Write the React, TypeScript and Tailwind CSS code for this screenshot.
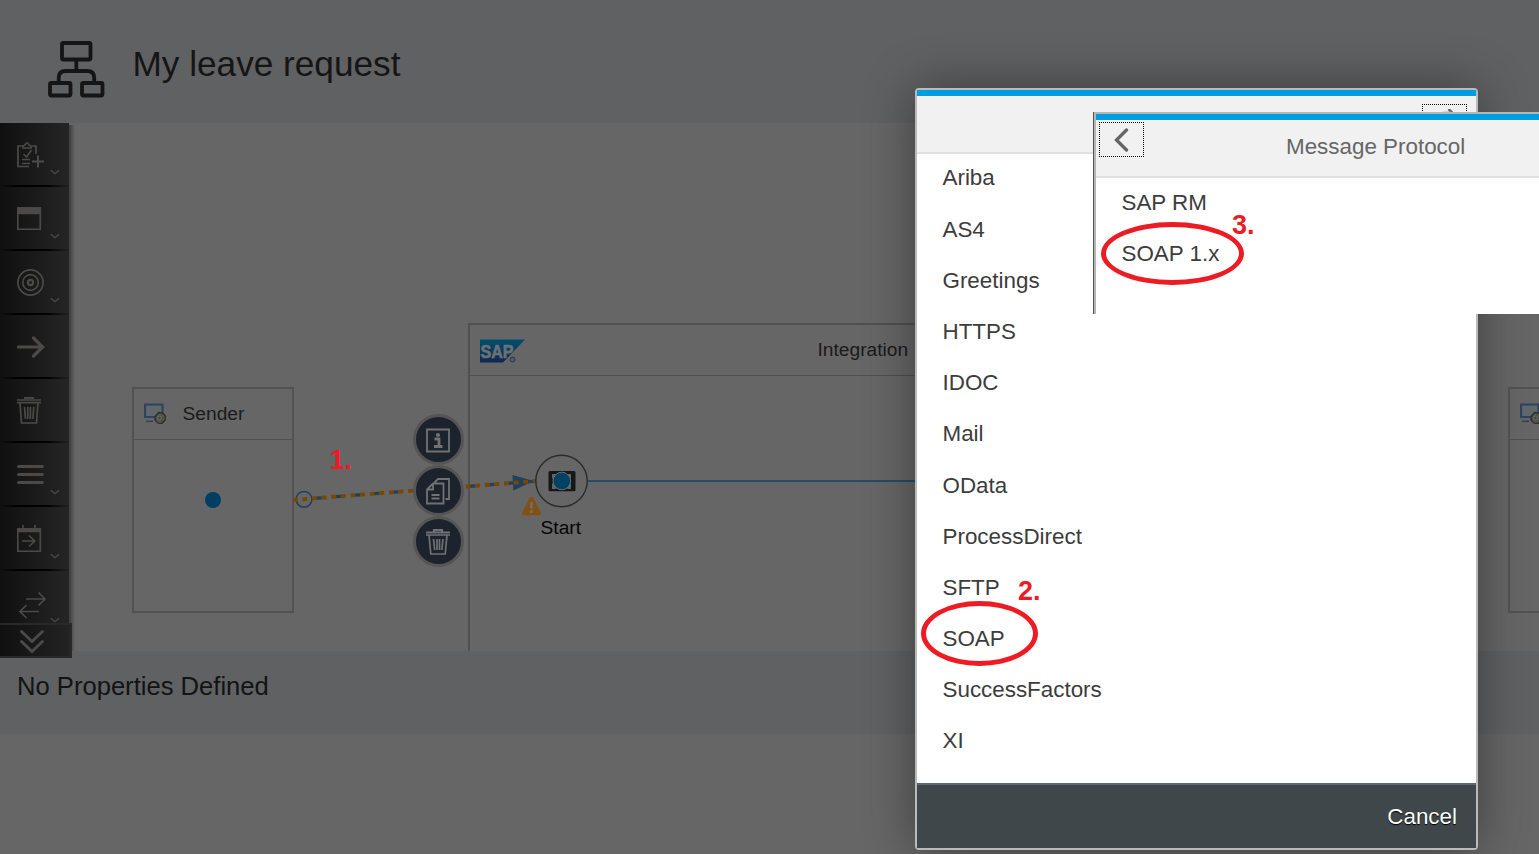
import React from "react";

const protocols = [
  "Ariba",
  "AS4",
  "Greetings",
  "HTTPS",
  "IDOC",
  "Mail",
  "OData",
  "ProcessDirect",
  "SFTP",
  "SOAP",
  "SuccessFactors",
  "XI",
];

const toolIcons: { name: string; menu: boolean; art: React.ReactNode }[] = [
  {
    name: "task",
    menu: true,
    art: (
      <g strokeWidth="1.7">
        <path d="M12 25.500H1V5h4.500M15 5h4v8" />
        <path d="M6 7V5l2-1q2-4.500 4 0l2 1v2z" />
        <path d="M6.500 13l3 3 5-7M5 18.500h8M5 22.500h8" />
        <path d="M15 20.500h12M21 14.500v12" strokeWidth="2" />
      </g>
    ),
  },
  {
    name: "window",
    menu: true,
    art: (
      <g strokeWidth="1.600">
        <path d="M.8 3h22.500v21.200H.8z" />
        <path d="M.8 3h22.500v5.500H.8z" fill="#4b4a48" />
      </g>
    ),
  },
  {
    name: "target",
    menu: true,
    art: (
      <g strokeWidth="1.700">
        <circle cx="13.500" cy="13.500" r="12.600" />
        <circle cx="13.500" cy="13.500" r="7.800" />
        <circle cx="13.500" cy="13.500" r="2.600" strokeWidth="2.200" />
      </g>
    ),
  },
  {
    name: "connector",
    menu: false,
    art: <path d="M1.500 14H26M16.500 5l9 9-9 9" strokeWidth="3.2" strokeLinecap="round" strokeLinejoin="round" />,
  },
  {
    name: "delete",
    menu: false,
    art: (
      <g strokeWidth="1.700">
        <path d="M0 3h24M0 5.600h24M8 2V.8h8V2" />
        <path d="M3 6l1.500 20h15L21 6M7.500 10l1 12M10.800 10v12M13.400 10v12M16.800 10l-1 12" />
      </g>
    ),
  },
  {
    name: "list",
    menu: true,
    art: <path d="M1.500 5.500h24M1.500 13.500h24M1.500 21.500h24" strokeWidth="3" strokeLinecap="round" />,
  },
  {
    name: "event",
    menu: true,
    art: (
      <g strokeWidth="1.600">
        <path d="M.8 4h22.500v22.200H.8z" />
        <path d="M.8 4h22.500v2.500H.8z" fill="#4b4a48" />
        <path d="M6 0v4M18 0v4M5 16h12.500M12 10.500l5.800 5.500-5.800 5.500" />
      </g>
    ),
  },
  {
    name: "exchange",
    menu: true,
    art: (
      <path
        d="M9 10h19M21.500 3.500L28 10l-6.500 6.500M22 22.500H3M9.500 16L3 22.500 9.500 29"
        strokeWidth="1.700"
      />
    ),
  },
];

function Tool({ name, menu, art }: { name: string; menu: boolean; art: React.ReactNode }) {
  return (
    <div className="flex h-16 shrink-0 flex-col" aria-label={name}>
      <div className="flex h-[62px] justify-between pl-[17px] pr-[9px] pt-[18px]">
        <svg width="30" height="30" viewBox="0 0 30 30" fill="none" stroke="#4b4a48">
          {art}
        </svg>
        {menu && (
          <svg className="mt-[28px]" width="10" height="7" viewBox="0 0 10 7" fill="none" stroke="#4b4a48" strokeWidth="1.3">
            <path d="M.8 1.300L5 4.700l4.200-3.400" />
          </svg>
        )}
      </div>
      <div className="h-0.5 bg-linear-to-r from-[#101010] via-black to-[#222222]" />
    </div>
  );
}

function SystemIcon() {
  return (
    <svg className="shrink-0" width="23" height="22" viewBox="0 0 23 22" fill="none">
      <path d="M1 1.500h17.500V14H1z" fill="#61676b" stroke="#2f435f" strokeWidth="2.200" />
      <path d="M2 18.300h7" stroke="#2f435f" strokeWidth="1.600" />
      <path d="M15 9.300l4 1 2.500 3-.5 4-3 3-4-.2-3-3 .3-4z" fill="#5b5b38" stroke="#282c34" strokeWidth="1.300" />
      <circle cx="15.500" cy="15" r="3.400" fill="#62655f" stroke="#44484a" />
      <circle cx="15.500" cy="15" r="1.200" fill="#3a4047" />
    </svg>
  );
}

function Participant({ label }: { label: string }) {
  return (
    <div className="flex h-[226px] w-[162px] flex-col border-2 border-[#525252]">
      <div className="flex h-[51px] items-center border-b border-[#505050] pl-[9.5px]">
        <SystemIcon />
        <span className="ml-[16px] text-[19.2px] text-[#1a1a1a]">{label}</span>
      </div>
    </div>
  );
}

function RoundButton({ children }: { children: React.ReactNode }) {
  return (
    <div className="flex size-[51px] items-center justify-center rounded-full border-3 border-[#555555] bg-[#1c232c] pr-[1px]">
      <svg width="26" height="28" viewBox="0 0 26 28" fill="none" stroke="#707274" strokeWidth="1.800">
        {children}
      </svg>
    </div>
  );
}

function Canvas() {
  return (
    <main className="relative h-[528px] overflow-hidden bg-[#666666]">
      <div className="absolute left-[132px] top-[264px]">
        <Participant label="Sender" />
      </div>
      <div className="absolute left-[1508px] top-[264px]">
        <Participant label="" />
      </div>
      <section className="absolute left-[468px] top-[200px] h-[340px] w-[900px] border-2 border-[#505050]">
        <div className="flex h-[51px] items-center border-b border-[#505050] pl-[10px] pt-[1px]">
          <svg width="46" height="24" viewBox="0 0 46 24">
            <defs>
              <linearGradient id="sap" x1="0" y1="0" x2="0" y2="1">
                <stop offset="0" stopColor="#00506f" />
                <stop offset="1" stopColor="#11284f" />
              </linearGradient>
            </defs>
            <path d="M0 0.500h45L23 23.500H0z" fill="url(#sap)" />
            <text
              x="0.5"
              y="18.500"
              fontSize="18"
              fontWeight="bold"
              textLength="33"
              lengthAdjust="spacingAndGlyphs"
              fill="#6b7075"
              stroke="#6b7075"
              strokeWidth="0.700"
            >
              SAP
            </text>
            <circle cx="32.500" cy="20.500" r="2.400" fill="#505a68" stroke="#26374f" />
          </svg>
          <span className="-mt-[1px] ml-[291.5px] text-[19.2px] text-[#1a1a1a]">Integration</span>
        </div>
      </section>
      <svg className="absolute left-0 top-0" width="1000" height="528" viewBox="0 123 1000 528" fill="none">
        <circle cx="213" cy="500" r="8" fill="#003f63" />
        <circle cx="304" cy="499.300" r="7.900" stroke="#223f5c" strokeWidth="1.500" />
        <path d="M512.500 475l.8 15.500 20.500-9.500z" fill="#223f5c" />
        <path d="M316.500 498.200L535 481.200" stroke="#223f5c" strokeWidth="3.300" strokeDasharray="5.200 14.050" />
        <path d="M293 500L536 481" stroke="#764800" strokeWidth="3.800" strokeDasharray="4.812 4.812" />
        <path d="M588 481H1000" stroke="#284a68" strokeWidth="2" />
        <circle cx="561.500" cy="481" r="25.700" stroke="#2b2b2b" strokeWidth="1.400" />
        <rect x="548.500" y="471" width="27" height="20.300" rx="1.500" fill="#171717" />
        <path d="M552 474h3l3 1h7l3-1h3v4l-1 1v4l1 1v5h-3l-3-1h-7l-3 1h-3v-5l1-1v-4l-1-1z" fill="#646464" />
        <circle cx="561.800" cy="481" r="8.800" fill="#004166" stroke="#6a7074" />
        <path d="M531.500 499l7.500 14.300h-15z" fill="#815115" stroke="#815115" strokeWidth="4" strokeLinejoin="round" />
        <path d="M531.500 502v6.500M531.500 510.300v2.700" stroke="#757068" strokeWidth="2.400" />
      </svg>
      <span className="absolute left-[540.5px] top-[394px] text-[19.2px] leading-[22px] text-[#050505]">Start</span>
      <div className="absolute left-[413px] top-[291px] flex flex-col">
        <RoundButton>
          <path d="M2 3.500h22v22H2z" />
          <circle cx="13" cy="9" r="2.100" fill="#707274" stroke="none" />
          <path d="M9.500 13H14V20M9 20.500h8.500" strokeWidth="2.800" />
        </RoundButton>
        <RoundButton>
          <path d="M2 12.500L8 6.500h10.500v20H2zM2 12.500h6v-6M9.500 5.500L13 2h11v20h-3.500M6.500 18h8M6.500 21.500h8" />
        </RoundButton>
        <RoundButton>
          <path d="M1 4.500h24M9 3.500V2h8v1.500" strokeWidth="2.200" />
          <path d="M1 7h24M4 7l1.800 19h14.400L22 7M8.500 11l1.200 11M12 11v11M14.500 11v11M18 11l-1.200 11" strokeWidth="1.700" />
        </RoundButton>
      </div>
    </main>
  );
}

function ProtocolDialog() {
  return (
    <div className="absolute left-[915px] top-[88px] flex h-[762px] w-[563px] flex-col rounded-[4px] border-2 border-[#b9bab9] bg-white shadow-[0_0_50px_rgba(0,0,0,0.4)]">
      <div className="flex h-[64px] shrink-0 justify-end border-b-2 border-[#e1e1e1] border-t-6 border-t-[#009de0] bg-[#f1f1f1] pr-[9px] pt-[8px]">
        <div className="flex h-[35px] w-[45px] justify-center border border-dotted border-black pt-[4px]">
          <svg width="26" height="26" viewBox="0 0 26 26" fill="none" stroke="#666">
            <path d="M16.500 0l6 6-6 6" strokeWidth="2.500" />
            <path d="M8 4.500q4-2 11-1" strokeWidth="1.500" stroke="#aaaaaa" />
          </svg>
        </div>
      </div>
      <ul className="-mt-[1.4px] flex grow flex-col text-[22.4px] text-[#3c3c3c]">
        {protocols.map((name) => (
          <li key={name} className="flex h-[51.2px] shrink-0 items-center pl-[25.5px]">
            {name}
          </li>
        ))}
      </ul>
      <div className="flex h-[65px] shrink-0 items-center justify-end border-t-2 border-[#586a73] bg-[#3f474a] pr-[19px] text-[22.4px] text-white [text-shadow:0_1px_1px_#000]">
        Cancel
      </div>
    </div>
  );
}

function MessageProtocolPanel() {
  return (
    <div className="absolute left-[1093px] top-[112px] flex h-[202px] w-[446px] border-l border-[#555555]">
      <div className="flex grow flex-col border-l-2 border-t-2 border-[#b5b7b6] bg-white">
        <div className="flex h-[64px] shrink-0 border-b-2 border-[#e1e1e1] border-t-6 border-t-[#009de0] bg-[#f1f1f1] pl-[3px] pt-[2px]">
          <div className="flex h-[35px] w-[45px] shrink-0 items-center justify-center border border-dotted border-black">
            <svg width="16" height="24" viewBox="0 0 16 24" fill="none" stroke="#666666" strokeWidth="3.300" strokeLinecap="round">
              <path d="M12.500 2L2.500 12l10 10" />
            </svg>
          </div>
          <h2 className="ml-[142px] mt-[10.5px] text-[22.4px] leading-[28px] text-[#666666]">Message Protocol</h2>
        </div>
        <ul className="-mt-[0.6px] flex flex-col text-[22.4px] text-[#3c3c3c]">
          <li className="flex h-[51.2px] items-center pl-[25.5px]">SAP RM</li>
          <li className="flex h-[51.2px] items-center pl-[25.5px]">SOAP 1.x</li>
        </ul>
      </div>
    </div>
  );
}

export default function App() {
  return (
    <div className="relative flex h-[854px] w-[1539px] flex-col overflow-hidden bg-[#666666] font-['Liberation_Sans',Arial,sans-serif]">
      <header className="flex h-[123px] shrink-0 items-start bg-[#606163] pl-[48px] pt-[40px]">
        <svg width="58" height="58" viewBox="48 40 58 58" fill="none" stroke="#151515" strokeWidth="3.800">
          <rect x="62" y="43" width="28.500" height="16.500" rx="1.500" />
          <rect x="50" y="83" width="20.500" height="12.500" rx="1.500" />
          <rect x="82" y="83" width="20.500" height="12.500" rx="1.500" />
          <path d="M76.300 60v11M58.700 82v-4q0-7 7-7h21.500q7 0 7 7v4" />
        </svg>
        <h1 className="ml-[26.5px] mt-[4px] text-[35.2px] leading-[40px] text-[#151515]">My leave request</h1>
      </header>
      <Canvas />
      <section className="h-[83px] shrink-0 bg-[#5f6163] pl-[17px] pt-[20px] text-[25.6px] leading-[30px] text-[#131313]">
        No Properties Defined
      </section>

      <nav className="absolute left-0 top-[123px] flex h-[535px] w-[72px] flex-col">
        <div className="absolute left-[69px] top-[2px] h-[526px] w-[6px] bg-linear-to-r from-[#3c3c3c] to-[#666666]" />
        <div className="flex h-[500px] w-[69px] flex-col overflow-hidden bg-linear-to-r from-[#101010] to-[#252525]">
          {toolIcons.map((tool) => (
            <Tool key={tool.name} {...tool} />
          ))}
        </div>
        <div className="relative flex h-[35px] w-[72px] border-2 border-l-0 border-[#292929] bg-linear-to-r from-[#101010] to-[#232323] pl-[19px] pt-[3px]">
          <svg width="26" height="26" viewBox="0 0 26 26" fill="none" stroke="#4b4a48" strokeWidth="3" strokeLinecap="round">
            <path d="M2.500 3.500L13 13.500l10.500-10M2.500 13.500L13 23.500l10.500-10" />
          </svg>
        </div>
      </nav>

      <ProtocolDialog />
      <MessageProtocolPanel />

      <div className="pointer-events-none absolute inset-0 text-[27px] font-bold leading-[30px] text-[#ed1c24]">
        <span className="absolute left-[329.5px] top-[445px]">1.</span>
        <span className="absolute left-[1018px] top-[576px]">2.</span>
        <span className="absolute left-[1232px] top-[210px]">3.</span>
        <div className="absolute left-[921px] top-[601px] h-[65px] w-[117px] rounded-[50%] border-[5px] border-[#ed1c24]" />
        <div className="absolute left-[1101px] top-[222px] h-[63px] w-[143px] rounded-[50%] border-[5px] border-[#ed1c24]" />
      </div>
    </div>
  );
}
